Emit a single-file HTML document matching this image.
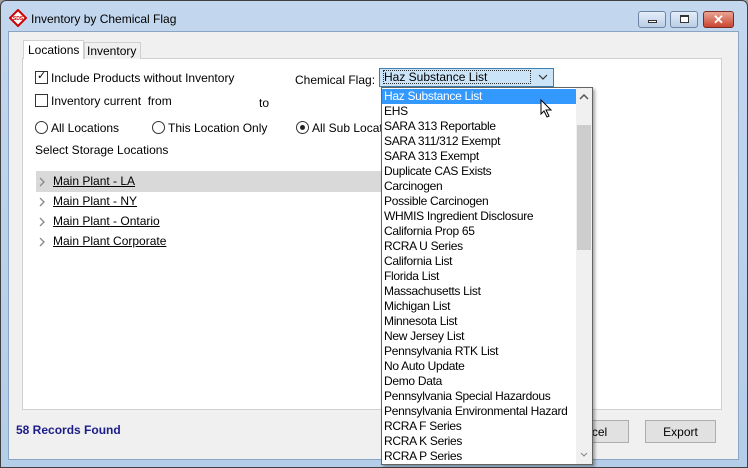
<!DOCTYPE html>
<html><head><style>
*{margin:0;padding:0;box-sizing:border-box}
body{width:748px;height:468px;overflow:hidden;background:#a0a0a0;font-family:"Liberation Sans",sans-serif;font-size:12px;color:#000;position:relative}
.a{position:absolute}
.win{left:0;top:0;width:748px;height:468px;background:linear-gradient(#c3d7ee,#b4cde8);border:1px solid #404040;border-radius:6px 6px 0 0}
.client{left:8px;top:31px;width:731px;height:429px;background:#f0f0f0;border:1px solid #8aa4c4}
.panel{left:22px;top:58px;width:700px;height:352px;background:#fff;border:1px solid #d0d0d0}
.cb{width:13px;height:13px;border:1px solid #333;background:#fff}
.rb{width:13px;height:13px;border:1px solid #333;border-radius:50%;background:#fff}
.t{white-space:nowrap}
.btn{border:1px solid #adadad;background:#e1e1e1;text-align:center;line-height:22px}
.list{left:381px;top:87px;width:212px;height:378px;background:#fff;border:1px solid #646464;box-shadow:2px 2px 3px rgba(0,0,0,.35);overflow:hidden;padding-top:1px}
.list div{height:15px;line-height:15px;padding-left:2px;white-space:nowrap;font-size:12px;letter-spacing:-0.3px}
.u{text-decoration:underline}
</style></head><body>
<div class="a win"></div>
<svg class="a" style="left:9px;top:9px" width="18" height="18" viewBox="0 0 18 18"><path d="M9 1L17 9L9 17L1 9Z" fill="#fff" stroke="#c00" stroke-width="2"/><text x="9" y="11" font-size="5" text-anchor="middle" font-family="Liberation Sans" font-weight="bold" fill="#c00">SDS</text></svg>
<div class="a t" style="left:31px;top:12px;font-size:12px">Inventory by Chemical Flag</div>
<div class="a" style="left:638px;top:11px;width:28px;height:17px;border:1px solid #6d84a3;border-radius:3px;background:linear-gradient(#e5eefa,#b9cde6)"><div class="a" style="left:9px;top:8px;width:9px;height:3px;border:1px solid #333;background:#fff"></div></div>
<div class="a" style="left:670px;top:11px;width:28px;height:17px;border:1px solid #6d84a3;border-radius:3px;background:linear-gradient(#e5eefa,#b9cde6)"><div class="a" style="left:9px;top:3px;width:9px;height:8px;border:1px solid #333;border-top-width:2px;background:#fff"></div></div>
<div class="a" style="left:703px;top:11px;width:31px;height:17px;border:1px solid #7a2a20;border-radius:3px;background:linear-gradient(#e9a595,#c9452f);color:#fff;font-weight:bold;text-align:center;line-height:15px;font-size:13px">✕</div>
<div class="a client"></div>
<div class="a panel"></div>
<div class="a" style="left:23px;top:40px;width:61px;height:19px;background:#fff;border:1px solid #d0d0d0;border-bottom:none"></div>
<div class="a t" style="left:28px;top:43px">Locations</div>
<div class="a" style="left:84px;top:42px;width:57px;height:17px;background:#f0f0f0;border:1px solid #d0d0d0;border-bottom:none"></div>
<div class="a t" style="left:87px;top:44px">Inventory</div>
<div class="a cb" style="left:35px;top:71px"></div>
<div class="a t" style="left:37px;top:69px;font-size:11px">✓</div>
<div class="a t" style="left:51px;top:71px">Include Products without Inventory</div>
<div class="a cb" style="left:35px;top:94px"></div>
<div class="a t" style="left:51px;top:94px">Inventory current&nbsp; from</div>
<div class="a t" style="left:259px;top:96px">to</div>
<div class="a t" style="left:295px;top:73px">Chemical Flag:</div>
<div class="a" style="left:379px;top:68px;width:175px;height:19px;border:1px solid #3c7fb1;background:#cce4f7"></div>
<div class="a t" style="left:383px;top:70px;border:1px dotted #333;width:148px;height:14px;line-height:12px">Haz Substance List</div>
<svg class="a" style="left:538px;top:74px" width="10" height="7"><path d="M1 1L5 5L9 1" fill="none" stroke="#333" stroke-width="1.2"/></svg>
<div class="a rb" style="left:35px;top:121px"></div>
<div class="a t" style="left:51px;top:121px">All Locations</div>
<div class="a rb" style="left:152px;top:121px"></div>
<div class="a t" style="left:168px;top:121px">This Location Only</div>
<div class="a rb" style="left:296px;top:121px"></div>
<div class="a" style="left:300px;top:125px;width:5px;height:5px;border-radius:50%;background:#222"></div>
<div class="a t" style="left:312px;top:121px">All Sub Locations</div>
<div class="a t" style="left:35px;top:143px">Select Storage Locations</div>
<div class="a" style="left:36px;top:171px;width:346px;height:21px;background:#d9d9d9"></div>
<svg class="a" style="left:39px;top:177px" width="6" height="70"><path d="M1 1L5 5L1 9M1 21L5 25L1 29M1 41L5 45L1 49M1 61L5 65L1 69" fill="none" stroke="#888" stroke-width="1.3"/></svg>
<div class="a t u" style="left:53px;top:174px">Main Plant - LA</div>
<div class="a t u" style="left:53px;top:194px">Main Plant - NY</div>
<div class="a t u" style="left:53px;top:214px">Main Plant - Ontario</div>
<div class="a t u" style="left:53px;top:234px">Main Plant Corporate</div>
<div class="a t" style="left:16px;top:423px;color:#1c1c8a;font-weight:bold">58 Records Found</div>
<div class="a btn" style="left:548px;top:420px;width:81px;height:23px">Cancel</div>
<div class="a btn" style="left:645px;top:420px;width:71px;height:23px">Export</div>
<div class="a list">
<div style="background:#3399ff;color:#fff;width:194px">Haz Substance List</div>
<div>EHS</div><div>SARA 313 Reportable</div><div>SARA 311/312 Exempt</div><div>SARA 313 Exempt</div><div>Duplicate CAS Exists</div><div>Carcinogen</div><div>Possible Carcinogen</div><div>WHMIS Ingredient Disclosure</div><div>California Prop 65</div><div>RCRA U Series</div><div>California List</div><div>Florida List</div><div>Massachusetts List</div><div>Michigan List</div><div>Minnesota List</div><div>New Jersey List</div><div>Pennsylvania RTK List</div><div>No Auto Update</div><div>Demo Data</div><div>Pennsylvania Special Hazardous</div><div>Pennsylvania Environmental Hazard</div><div>RCRA F Series</div><div>RCRA K Series</div><div>RCRA P Series</div>
</div>
<div class="a" style="left:576px;top:88px;width:16px;height:376px;background:#f0f0f0"></div>
<div class="a" style="left:577px;top:125px;width:14px;height:125px;background:#cdcdcd"></div>
<svg class="a" style="left:579px;top:94px" width="10" height="6"><path d="M1 5L5 1L9 5" fill="none" stroke="#555" stroke-width="1.5"/></svg>
<svg class="a" style="left:580px;top:452px" width="8" height="5"><path d="M1 1L4 4L7 1" fill="none" stroke="#888" stroke-width="1"/></svg>
<svg class="a" style="left:540px;top:99px" width="13" height="20"><path d="M1 1L1 15L4 12L7 18L9 17L6 11L11 11Z" fill="#fff" stroke="#000"/></svg>
</body></html>
